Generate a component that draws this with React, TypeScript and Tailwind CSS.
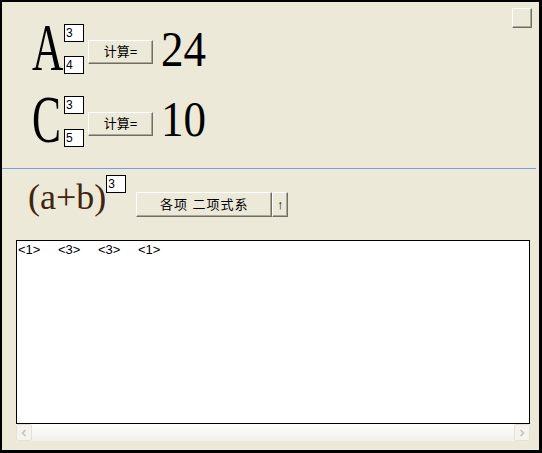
import React from 'react'

const serif = { fontFamily: '"Liberation Serif", "Times New Roman", serif' }
const cjk = { fontFamily: '"Liberation Sans", "Noto Sans CJK SC", sans-serif' }

function SmallBox({ value }: { value: string }) {
  return (
    <input
      readOnly
      value={value}
      className="block w-[20px] h-[18px] bg-white border border-black px-[1px] text-[12px] leading-[16px] text-black outline-none"
      style={{ fontFamily: '"Liberation Sans", Arial, sans-serif' }}
    />
  )
}

function XpButton({ children, className = '' }: { children?: React.ReactNode; className?: string }) {
  return (
    <button
      className={`flex items-center justify-center bg-[#ece9d8] border border-t-white border-l-white border-r-[#716f64] border-b-[#716f64] shadow-[inset_-1px_-1px_0_#aca899] text-[13px] text-black ${className}`}
      style={cjk}
    >
      {children}
    </button>
  )
}

function Formula({ letter, top, bottom, result, resultOffset }: { letter: string; top: string; bottom: string; result: string; resultOffset: string }) {
  return (
    <div className="flex items-start">
      <div className="w-[32px] h-[68px] ml-[30px]">
        <span
          className="inline-block text-[68px] leading-[68px] text-black origin-left scale-x-[0.64]"
          style={serif}
        >
          {letter}
        </span>
      </div>
      <div className={`flex flex-col mt-[11px] ${letter === 'A' ? 'gap-[14px]' : 'gap-[15px]'}`}>
        <SmallBox value={top} />
        <SmallBox value={bottom} />
      </div>
      <XpButton className="ml-[4px] mt-[27px] w-[65px] h-[24px]">计算=</XpButton>
      <div className={`ml-[8px] w-[46px] ${resultOffset}`}>
        <span className="inline-block text-[50px] leading-[50px] text-black origin-left scale-x-[0.9]" style={serif}>
          {result}
        </span>
      </div>
    </div>
  )
}

export default function App() {
  const terms = ['<1>', '<3>', '<3>', '<1>']
  return (
    <div className="w-[542px] h-[453px] bg-[#ece9d8] border-l-2 border-t-2 border-r-[3px] border-b-[3px] border-black flex flex-col overflow-hidden">
      <div className="flex h-[166px] shrink-0">
        <div className="flex flex-col gap-[4px] pt-[11px]">
          <Formula letter="A" top="3" bottom="4" result="24" resultOffset="mt-[11px]" />
          <Formula letter="C" top="3" bottom="5" result="10" resultOffset="mt-[9px]" />
        </div>
        <button className="ml-auto mr-[7px] mt-[6px] w-[20px] h-[20px] bg-[#ece9d8] border border-t-white border-l-white border-r-[#716f64] border-b-[#716f64] shadow-[inset_-1px_-1px_0_#aca899]" />
      </div>

      <div className="h-px w-[534px] bg-[#7a9ceb] shrink-0" />

      <div className="flex items-start mt-[6px] shrink-0">
        <span className="ml-[26px] mt-[4px] text-[36px] leading-[36px] text-[#3f2510]" style={serif}>
          (a+b)
        </span>
        <SmallBox value="3" />
        <div className="flex ml-[10px] mt-[17px]">
          <XpButton className="w-[136px] h-[25px] text-[12px] tracking-[1px]">各项 二项式系</XpButton>
          <XpButton className="w-[16px] h-[25px] text-[12px]">↑</XpButton>
        </div>
      </div>

      <div className="ml-[14px] mt-[23px] w-[514px] shrink-0">
        <div className="h-[184px] bg-white border border-black px-[1px] pt-[2px]">
          <div className="flex text-[13px] leading-[14px] text-black" style={cjk}>
            {terms.map((t, i) => (
              <span key={i} className="w-[40px]">
                {t}
              </span>
            ))}
          </div>
        </div>
        <div className="flex h-[17px] bg-gradient-to-b from-[#fefefe] to-[#f1f0ea]">
          <div className="w-[16px] h-[17px] flex items-center justify-center bg-[#f4f3ee] border border-[#e3e2da] rounded-[2px]">
            <svg width="8" height="8" viewBox="0 0 8 8">
              <path d="M5.5 1 L2.5 4 L5.5 7" fill="none" stroke="#c3c3bb" strokeWidth="1.6" />
            </svg>
          </div>
          <div className="flex-1" />
          <div className="w-[16px] h-[17px] flex items-center justify-center bg-[#f4f3ee] border border-[#e3e2da] rounded-[2px]">
            <svg width="8" height="8" viewBox="0 0 8 8">
              <path d="M2.5 1 L5.5 4 L2.5 7" fill="none" stroke="#c3c3bb" strokeWidth="1.6" />
            </svg>
          </div>
        </div>
      </div>
    </div>
  )
}
